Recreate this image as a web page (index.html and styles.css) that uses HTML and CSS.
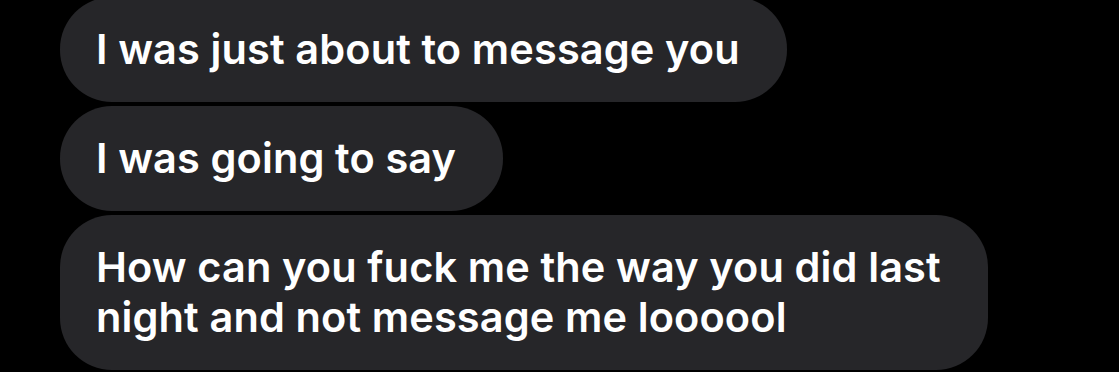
FILE: index.html
```html
<!DOCTYPE html>
<html>
<head>
<meta charset="utf-8">
<link rel="stylesheet" href="styles.css">
</head>
<body>
<div class="thread">
  <div class="bubble">I was just about to message you</div>
  <div class="bubble">I was going to say</div>
  <div class="bubble">How can you fuck me the way you did last<br>night and not message me loooool</div>
</div>
</body>
</html>
```
FILE: styles.css
```css
html, body {
  margin: 0;
  padding: 0;
  background: #000;
  height: 100%;
  overflow: hidden;
}
.thread {
  display: flex;
  flex-direction: column;
  align-items: flex-start;
  gap: 4px;
  margin-top: -3px;
  padding-left: 60px;
}
.bubble {
  background: #262629;
  color: #fff;
  font-family: Inter, "Noto Sans", sans-serif;
  font-weight: 600;
  font-size: 41.5px;
  letter-spacing: 0.12px;
  line-height: 50px;
  padding: 27px 47px 28px 36px;
  border-radius: 52px;
  white-space: nowrap;
}
```
